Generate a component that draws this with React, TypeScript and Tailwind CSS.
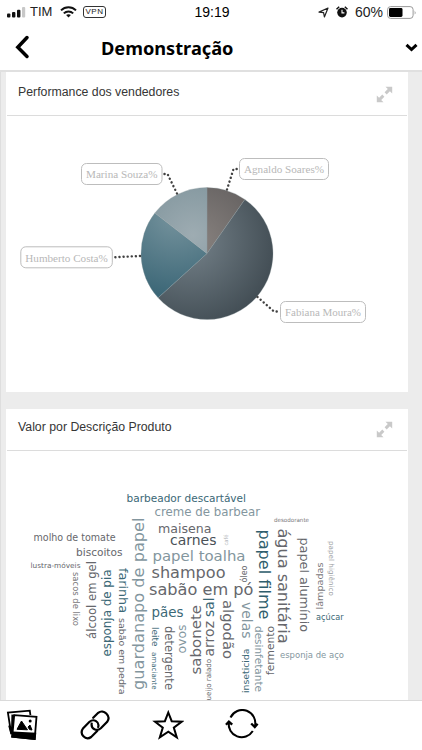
import type { ReactNode } from 'react';

interface Slice {
  name: string;
  from: number;
  to: number;
  fill: string;
  box: { x: number; y: number; w: number };
  leader: string;
}

interface Word {
  text: string;
  x: number;
  y: number;
  length: number;
  size: number;
  color: string;
  dir?: 'up' | 'down';
}

const CX = 201;
const CY = 137.5;
const RADIUS = 66;

const SLICES: Slice[] = [
  { name: 'Agnaldo Soares', from: 0, to: 35, fill: 'url(#pie-brown)', box: { x: 233.5, y: 42.5, w: 89 }, leader: 'M221 73.5 L227.5 53 H233' },
  { name: 'Fabiana Moura', from: 35, to: 227.8, fill: 'url(#pie-slate)', box: { x: 274.5, y: 185.5, w: 85 }, leader: 'M251.5 181 L268 195.5 H274' },
  { name: 'Humberto Costa', from: 227.8, to: 307.8, fill: 'url(#pie-teal)', box: { x: 14.8, y: 130.8, w: 91.5 }, leader: 'M134 140 L107 141.3' },
  { name: 'Marina Souza', from: 307.8, to: 360, fill: 'url(#pie-mist)', box: { x: 75.5, y: 47.5, w: 80.5 }, leader: 'M171 77.5 L161.5 58 H156' },
];

const GRAY = '#66676c';
const BROWN = '#79777a';
const TEAL = '#3b6876';
const DARK = '#4a5157';
const MIST = '#83969e';

// x / y is the start of the baseline, length runs along the reading direction
const WORDS: Word[] = [
  { text: 'barbeador descartável', x: 126.5, y: 501.5, length: 119.5, size: 10.7, color: TEAL },
  { text: 'creme de barbear', x: 154.5, y: 515.5, length: 105.5, size: 11.6, color: MIST },
  { text: 'desodorante', x: 274, y: 522, length: 35, size: 5.6, color: BROWN },
  { text: 'maisena', x: 158, y: 532.5, length: 53.5, size: 12.6, color: GRAY },
  { text: 'carnes', x: 170, y: 545, length: 46.5, size: 13.6, color: DARK },
  { text: 'papel toalha', x: 152.5, y: 560.5, length: 93, size: 14.7, color: MIST },
  { text: 'shampoo', x: 151.5, y: 578, length: 74, size: 16, color: GRAY },
  { text: 'sabão em pó', x: 149, y: 594.8, length: 104.5, size: 16.2, color: GRAY },
  { text: 'molho de tomate', x: 33.5, y: 541, length: 82, size: 9.7, color: GRAY },
  { text: 'biscoitos', x: 76, y: 556, length: 46.5, size: 10.5, color: GRAY },
  { text: 'lustra-móveis', x: 30.5, y: 567.5, length: 50, size: 7.3, color: GRAY },
  { text: 'pães', x: 151.5, y: 616.5, length: 32, size: 13.4, color: TEAL },
  { text: 'açúcar', x: 316, y: 620.3, length: 27.5, size: 8.3, color: TEAL },
  { text: 'esponja de aço', x: 280, y: 658, length: 64, size: 8.7, color: MIST },
  { text: 'café', x: 227.5, y: 545.5, length: 11, size: 5.5, color: '#b0b4b7', dir: 'up' },
  { text: 'óleo', x: 246.5, y: 582.5, length: 17, size: 8, color: GRAY, dir: 'up' },
  { text: 'sacos de lixo', x: 73.3, y: 572, length: 54, size: 8.2, color: BROWN, dir: 'down' },
  { text: 'álcool em gel', x: 95.7, y: 639, length: 78, size: 12, color: GRAY, dir: 'up' },
  { text: 'esponja de pia', x: 111, y: 656.5, length: 87, size: 11.8, color: TEAL, dir: 'up' },
  { text: 'farinha', x: 118.8, y: 568, length: 45, size: 12.3, color: TEAL, dir: 'down' },
  { text: 'sabão em pedra', x: 119.3, y: 618, length: 76.5, size: 9.3, color: GRAY, dir: 'down' },
  { text: 'guardanapo de papel', x: 143.5, y: 690, length: 172.5, size: 16.3, color: MIST, dir: 'up' },
  { text: 'leite', x: 152, y: 627, length: 19.5, size: 8.7, color: TEAL, dir: 'down' },
  { text: 'amaciante', x: 151.5, y: 652, length: 37.5, size: 7, color: TEAL, dir: 'down' },
  { text: 'detergente', x: 164.7, y: 626, length: 64, size: 11.5, color: GRAY, dir: 'down' },
  { text: 'ovos', x: 186, y: 653.5, length: 29, size: 12.2, color: MIST, dir: 'up' },
  { text: 'sabonete', x: 200.7, y: 674.5, length: 69.5, size: 14.8, color: GRAY, dir: 'up' },
  { text: 'sal', x: 213.5, y: 617, length: 19.5, size: 13.5, color: TEAL, dir: 'up' },
  { text: 'arroz', x: 213.5, y: 656.5, length: 35.5, size: 13.5, color: GRAY, dir: 'up' },
  { text: 'queijo ralado', x: 211, y: 705, length: 46, size: 7.2, color: GRAY, dir: 'up' },
  { text: 'algodão', x: 223, y: 600, length: 59, size: 14.6, color: GRAY, dir: 'down' },
  { text: 'velas', x: 241.5, y: 602, length: 36.5, size: 13.6, color: MIST, dir: 'down' },
  { text: 'inseticida', x: 249, y: 693, length: 44.5, size: 9, color: TEAL, dir: 'up' },
  { text: 'desinfetante', x: 255, y: 626, length: 66, size: 10, color: MIST, dir: 'down' },
  { text: 'papel filme', x: 259, y: 529.5, length: 90, size: 16, color: '#2f5e6d', dir: 'down' },
  { text: 'fermento', x: 274, y: 675, length: 49, size: 10.3, color: GRAY, dir: 'up' },
  { text: 'água sanitária', x: 278, y: 528.5, length: 115, size: 16, color: GRAY, dir: 'down' },
  { text: 'papel alumínio', x: 300.3, y: 537.5, length: 94.5, size: 12.8, color: GRAY, dir: 'down' },
  { text: 'lâmpadas', x: 322.5, y: 609.5, length: 47, size: 9.3, color: BROWN, dir: 'up' },
  { text: 'papel higiênico', x: 328.5, y: 541, length: 55, size: 7, color: '#9b9da1', dir: 'down' },
];

function pointAt(angle: number) {
  const rad = ((angle - 90) * Math.PI) / 180;
  return `${CX + RADIUS * Math.cos(rad)} ${CY + RADIUS * Math.sin(rad)}`;
}

function slicePath({ from, to }: Slice) {
  return `M${CX} ${CY} L${pointAt(from)} A${RADIUS} ${RADIUS} 0 ${to - from > 180 ? 1 : 0} 1 ${pointAt(to)} Z`;
}

function StatusBar() {
  return (
    <div className="flex h-6 items-center justify-between pr-[5px] pl-[7px] text-[13px] text-[#222]">
      <div className="flex w-[100px] items-center">
        <svg className="shrink-0" width="19" height="11" viewBox="0 0 19 11" fill="#111">
          <rect x="0" y="6.5" width="3.4" height="4" rx="1" />
          <rect x="5" y="5" width="3.4" height="5.5" rx="1" />
          <rect x="10" y="2.8" width="3.4" height="7.7" rx="1" />
          <rect x="15" y="0" width="3.2" height="10.5" rx="1" fill="#c8c8c8" />
        </svg>
        <span className="ml-1 w-[23px] whitespace-nowrap">TIM</span>
        <svg className="ml-[7px] shrink-0" width="17" height="12" viewBox="0 0 17 12" fill="none" stroke="#111" strokeWidth="2">
          <path d="M1 4.4 C5.2 .3 11.8 .3 16 4.4" />
          <path d="M3.8 7.4 C6.5 4.8 10.5 4.8 13.2 7.4" />
          <path d="M8.5 11.5 L6.1 9.1 C7.5 7.9 9.5 7.9 10.9 9.1 Z" fill="#111" stroke="none" />
        </svg>
        <span className="ml-[6px] flex h-3 w-[23px] shrink-0 items-center justify-center rounded-[3px] border border-[#333] text-[8px] leading-none font-medium tracking-[0.5px]">
          VPN
        </span>
      </div>
      <span className="text-[14px] text-black">19:19</span>
      <div className="flex w-[100px] items-center justify-end">
        <svg width="11" height="11" viewBox="0 0 11 11" fill="none" stroke="#222" strokeWidth="1.2" strokeLinejoin="round">
          <path d="M10 1 L6.4 10 L5.6 5.7 L1 5.1 Z" />
        </svg>
        <svg className="ml-[7px]" width="12" height="12" viewBox="0 0 12 12" fill="#111">
          <circle cx="6" cy="6.6" r="4.8" />
          <path d="M.5 3.2 L3.2 .8 M11.5 3.2 L8.8 .8" stroke="#111" strokeWidth="1.5" />
          <path d="M6 3.8 V6.9 H8.4" fill="none" stroke="#fff" strokeWidth="1.1" />
        </svg>
        <span className="ml-[7px] w-[29px] text-[14px] whitespace-nowrap">60%</span>
        <svg className="ml-[3px] shrink-0" width="30" height="13" viewBox="0 0 30 13">
          <rect x=".6" y=".6" width="25.5" height="11.8" rx="3" fill="#fff" stroke="#999" strokeWidth="1" />
          <rect x="2" y="2" width="13.5" height="9" rx="1.4" fill="#000" />
          <path d="M27.7 4.5 Q29.4 6.5 27.7 8.5 Z" fill="#999" />
        </svg>
      </div>
    </div>
  );
}

function ExpandIcon() {
  return (
    <svg className="mt-[3px]" width="17" height="17" viewBox="0 0 17 17" fill="#c9c9c9">
      <path d="M9.5 .8 H16.2 V7.5 L13.9 5.2 L10.7 8.4 L8.6 6.3 L11.8 3.1 Z" />
      <path d="M7.5 16.2 H.8 V9.5 L3.1 11.8 L6.3 8.6 L8.4 10.7 L5.2 13.9 Z" />
    </svg>
  );
}

function Panel({ title, className, children }: { title: string; className: string; children: ReactNode }) {
  return (
    <section className={`flex w-[402px] flex-col overflow-hidden bg-white ${className}`}>
      <div className="mx-px flex h-[42px] shrink-0 items-start justify-between border-b border-[#dcdcdc] pt-[9px] pr-[14px] pl-[11px]">
        <h2 className="text-[12.3px] leading-[18px] text-[#363636]">{title}</h2>
        <ExpandIcon />
      </div>
      {children}
    </section>
  );
}

function SalesPie() {
  return (
    <svg className="block" width="402" height="276" viewBox="0 0 402 276">
      <defs>
        <radialGradient id="pie-brown" gradientUnits="userSpaceOnUse" cx="190" cy="126" r="85">
          <stop offset="0" stopColor="#88827f" />
          <stop offset="1" stopColor="#5e5b5b" />
        </radialGradient>
        <radialGradient id="pie-slate" gradientUnits="userSpaceOnUse" cx="184" cy="125" r="88">
          <stop offset="0" stopColor="#75828a" />
          <stop offset="1" stopColor="#424d54" />
        </radialGradient>
        <radialGradient id="pie-teal" gradientUnits="userSpaceOnUse" cx="170" cy="98" r="82">
          <stop offset="0" stopColor="#77949e" />
          <stop offset="1" stopColor="#3c6777" />
        </radialGradient>
        <radialGradient id="pie-mist" gradientUnits="userSpaceOnUse" cx="187" cy="119" r="66">
          <stop offset="0" stopColor="#9eacb2" />
          <stop offset="1" stopColor="#7f949c" />
        </radialGradient>
      </defs>
      {SLICES.map((slice) => (
        <path key={slice.name} d={slicePath(slice)} fill={slice.fill} stroke="#8d999e" strokeWidth="0.3" />
      ))}
      {SLICES.map(({ name, box, leader }) => (
        <g key={name}>
          <path d={leader} fill="none" stroke="#414141" strokeWidth="2.4" strokeLinecap="round" strokeDasharray="0.1 4" />
          <rect x={box.x} y={box.y} width={box.w} height="21" rx="5" fill="#fff" stroke="#bdbdbd" />
          <text
            x={box.x + 4.5}
            y={box.y + 14.8}
            textLength={box.w - 9}
            lengthAdjust="spacingAndGlyphs"
            fontSize="11.4"
            fill="#b8b8b8"
            className="font-['Liberation_Serif',serif]"
          >
            {`${name}%`}
          </text>
        </g>
      ))}
    </svg>
  );
}

function WordCloud() {
  return (
    <svg className="block shrink-0" width="402" height="249" viewBox="6 451 402 249">
      {WORDS.map(({ text, x, y, length, size, color, dir }) => {
        const angle = dir === 'up' ? -90 : dir === 'down' ? 90 : 0;
        return (
          <text
            key={text}
            transform={`translate(${x} ${y}) rotate(${angle})`}
            textLength={length}
            lengthAdjust="spacingAndGlyphs"
            fontSize={size}
            fill={color}
            className="font-['DejaVu_Sans',sans-serif]"
          >
            {text}
          </text>
        );
      })}
    </svg>
  );
}

function Toolbar() {
  return (
    <nav className="flex h-[50px] items-start gap-[41px] border-t border-[#dadada] bg-white pt-[8px] pl-[6px]">
      <svg width="32" height="32" viewBox="0 0 32 32" fill="none" stroke="#000" strokeWidth="1.8">
        <path d="M5.2 24.5 L1.9 3.6 L23.8 1.6 L24.4 6" />
        <path d="M3.5 18 L5.2 24.5 L8 24 L8 6.5 L6.3 6.4 L6 19 Z" fill="#000" />
        <path d="M8.2 6.2 L30.5 7.8 L28.7 30 L6.2 27.8 Z" fill="#fff" />
        <path d="M6.8 23.5 L29.3 24.5 L28.7 30 L6.2 27.8 Z" fill="#000" />
        <path d="M11 20.3 L15.5 12 L21.5 20.8 Z" fill="#000" strokeWidth="1" />
        <path d="M22 18 L24 16 L26 21 L23.5 20.5 Z" fill="#000" strokeWidth="1" />
        <circle cx="24.2" cy="12" r="1.5" fill="#000" stroke="none" />
      </svg>
      <svg width="32" height="32" viewBox="0 0 32 32" fill="none" stroke="#000" strokeWidth="2.2" strokeLinecap="round">
        <path d="M14.2 8.8 L19.2 3.8 C24.5 -.5 32.5 7 28.2 12.8 L21.8 19.2 C17.8 23 11.8 20 12.7 14.5" />
        <path d="M18.2 22 L12.2 28 C6.5 32 -.2 25 4.2 19.2 L10.5 12.8 C14.8 9.2 20.7 12.8 19.2 18" />
      </svg>
      <svg width="32" height="32" viewBox="0 0 32 32" fill="none" stroke="#000" strokeWidth="2">
        <path d="M16.3 3.5 L19.7 12.2 L29.6 12.7 L21.8 18.6 L24.8 28.4 L16.3 22.7 L7.8 28.4 L10.8 18.6 L3 12.7 L12.9 12.2 Z" />
      </svg>
      <svg width="34" height="32" viewBox="0 0 34 32" fill="none" stroke="#000" strokeWidth="2">
        <path d="M5.5 8.5 A13 13 0 0 1 29.8 17.5" />
        <path d="M27.8 22 A13 13 0 0 1 3.9 13" />
        <path d="M26.2 14.5 L29.8 18 L32.6 14.8" strokeWidth="2.4" />
        <path d="M1 15.8 L3.9 12.6 L7.2 15.6" strokeWidth="2.4" />
      </svg>
    </nav>
  );
}

export default function App() {
  return (
    <div className="flex h-[750px] w-[422px] flex-col overflow-hidden bg-white font-['Liberation_Sans',Arial,sans-serif]">
      <StatusBar />
      <header className="flex h-12 shrink-0 items-center border-b-2 border-[#e0e0e0] pr-1 pl-[15px]">
        <svg width="16" height="24" viewBox="0 0 16 24" fill="none" stroke="#000" strokeWidth="3.5" strokeLinecap="round">
          <path d="M12 2.5 L2.8 12.2 L12 21.5" />
        </svg>
        <h1 className="ml-[70px] w-[133px] pt-0.5 font-['Noto_Sans',sans-serif] text-[18.2px] leading-6 font-bold whitespace-nowrap text-black">
          Demonstração
        </h1>
        <svg className="ml-auto" width="13" height="9" viewBox="0 0 13 9" fill="none" stroke="#000" strokeWidth="3">
          <path d="M1.5 1.8 L6.5 6.5 L11.5 1.8" />
        </svg>
      </header>
      <main className="flex min-h-0 flex-1 flex-col gap-[17px] overflow-hidden border-l border-[#dedede] bg-[#ececec] pl-[5px]">
        <Panel title="Performance dos vendedores" className="h-[320px] shrink-0 pt-0.5">
          <SalesPie />
        </Panel>
        <Panel title="Valor por Descrição Produto" className="min-h-0 flex-1">
          <WordCloud />
        </Panel>
      </main>
      <Toolbar />
    </div>
  );
}
